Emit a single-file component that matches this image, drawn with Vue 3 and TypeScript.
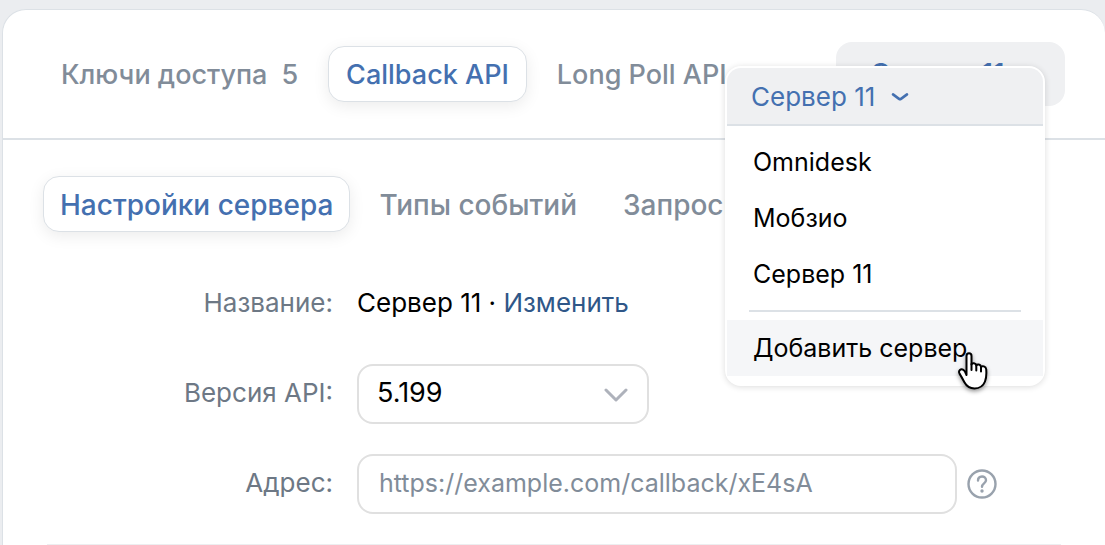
<script setup lang="ts">
import { ref } from 'vue'

interface Tab {
  id: string
  label: string
  count?: number
}

const sections: Tab[] = [
  { id: 'keys', label: 'Ключи доступа', count: 5 },
  { id: 'callback', label: 'Callback API' },
  { id: 'longpoll', label: 'Long Poll API' },
]
const subsections: Tab[] = [
  { id: 'settings', label: 'Настройки сервера' },
  { id: 'events', label: 'Типы событий' },
  { id: 'requests', label: 'Запросы' },
]
const servers: string[] = ['Omnidesk', 'Мобзио', 'Сервер 11']

const section = ref('callback')
const subsection = ref('settings')
const server = ref('Сервер 11')
const version = ref('5.199')
const address = ref('')
const menuOpen = ref(true)

function choose(name: string): void {
  server.value = name
  menuOpen.value = false
}
</script>

<template>
  <main class="card">
    <header class="header">
      <nav class="tabs">
        <button
          v-for="tab in sections"
          :key="tab.id"
          type="button"
          class="tab"
          :class="{ active: section === tab.id }"
          @click="section = tab.id"
        >
          {{ tab.label }}<span v-if="tab.count" class="count">{{ tab.count }}</span>
        </button>
      </nav>
      <div class="picker">
        <button type="button" class="picker-button" @click="menuOpen = true">{{ server }}</button>
        <div v-if="menuOpen" class="menu">
          <button type="button" class="menu-head" @click="menuOpen = false">
            {{ server }}
            <svg class="menu-chevron" viewBox="0 0 18 10" aria-hidden="true">
              <path d="M2 2.4 L8 6.8 Q9 7.4 10 6.8 L16 2.4" />
            </svg>
          </button>
          <div class="menu-list">
            <button v-for="name in servers" :key="name" type="button" class="item" @click="choose(name)">
              {{ name }}
            </button>
            <hr class="separator" />
            <button type="button" class="item hovered">
              <span class="item-text">Добавить сервер
                <svg class="cursor" viewBox="0 0 32 40" aria-hidden="true">
                  <path
                    d="M9.5 24 V5 C9.5 1.3 14.5 1.3 14.5 5 V13.5 C15 11.6 19 11.8 19.3 14.4 C20.2 12.8 23.6 13.2 24 15.8 C25.2 14.6 28.8 15.2 29.2 18.2 C29.6 23 29.4 27 28 30.5 C26.2 35 22.5 37.4 17.5 37.4 C12.5 37.4 9.6 35.2 7.4 31.2 C5.6 27.8 4.4 25.6 2.5 22.6 C1 19.6 3.8 17.2 6.4 18.8 C7.8 19.8 8.6 21.8 9.5 24 Z"
                  />
                  <path class="fingers" d="M14.5 13 V19 M19.3 14.5 V19.5 M24 16 V20.5" />
                </svg>
              </span>
            </button>
          </div>
        </div>
      </div>
    </header>

    <nav class="tabs subtabs">
      <button
        v-for="tab in subsections"
        :key="tab.id"
        type="button"
        class="tab"
        :class="{ active: subsection === tab.id }"
        @click="subsection = tab.id"
      >
        {{ tab.label }}
      </button>
    </nav>

    <form class="form" @submit.prevent>
      <span class="label">Название:</span>
      <div class="name">{{ server }} · <a href="#">Изменить</a></div>

      <label class="label" for="version">Версия API:</label>
      <div class="select">
        <select id="version" v-model="version" class="field">
          <option>5.199</option>
        </select>
        <svg class="select-chevron" viewBox="0 0 24 14" aria-hidden="true">
          <path d="M2 2 L12 12 L22 2" />
        </svg>
      </div>

      <label class="label" for="address">Адрес:</label>
      <div class="address">
        <input
          id="address"
          v-model="address"
          class="field"
          type="text"
          placeholder="https://example.com/callback/xE4sA"
        />
        <button type="button" class="help" aria-label="Справка">
          <svg viewBox="0 0 30 30" aria-hidden="true">
            <circle cx="15" cy="15" r="13.5" />
            <path d="M11 11.6 C11 6.2 19 6.2 19 11.2 C19 14.4 15 14.4 15 17.8" />
            <circle class="dot" cx="15" cy="22" r="1.7" />
          </svg>
        </button>
      </div>
    </form>
    <hr class="bottom-line" />
  </main>
</template>

<style>
html,
body {
  background: #ebedf0;
}
body {
  overflow: hidden;
}
</style>

<style scoped>
.card {
  box-sizing: border-box;
  margin: 9px 0 0 2px;
  border: 1px solid #dce1e6;
  border-right: 0;
  border-bottom: 0;
  border-radius: 24px 24px 0 0;
  background: #fff;
  color: #000;
  font: 400 26px/32px Inter, sans-serif;
}
button,
input,
select {
  margin: 0;
  border: 0;
  padding: 0;
  background: none;
  color: inherit;
  font: inherit;
  cursor: pointer;
}
.header {
  display: flex;
  align-items: center;
  justify-content: space-between;
  height: 128px;
  padding: 0 40px;
  border-bottom: 2px solid #dce1e6;
}
.tabs {
  display: flex;
  gap: 12px;
}
.tab {
  box-sizing: border-box;
  height: 56px;
  padding: 2px 17px 0;
  border: 1px solid transparent;
  border-radius: 16px;
  color: #818c99;
  font-size: 27px;
  font-weight: 500;
  white-space: nowrap;
}
.tab.active {
  border-color: #dce1e6;
  background: #fff;
  box-shadow: 0 4px 16px rgba(0, 0, 0, 0.08);
  color: #4470b0;
}
.count {
  margin-left: 14px;
}
.picker {
  position: relative;
}
.picker-button {
  width: 229px;
  height: 64px;
  padding: 0 34px;
  border-radius: 16px;
  background: #eff0f2;
  color: #4470b0;
  font-size: 28px;
  font-weight: 500;
  text-align: left;
}
.menu {
  position: absolute;
  top: 24px;
  right: 20px;
  z-index: 1;
  width: 316px;
  border: 2px solid #fff;
  border-radius: 16px;
  background: #fff;
  box-shadow: 0 1px 6px rgba(0, 0, 0, 0.14);
}
.menu-head {
  display: flex;
  align-items: center;
  gap: 16px;
  width: 100%;
  height: 58px;
  padding: 2px 24px 0;
  border-bottom: 2px solid #dce1e6;
  border-radius: 14px 14px 0 0;
  background: #eff0f2;
  color: #4470b0;
}
.menu-chevron {
  width: 18px;
  height: 10px;
  fill: none;
  stroke: #4470b0;
  stroke-width: 2.6;
  stroke-linecap: round;
}
.menu-list {
  display: flex;
  flex-direction: column;
  padding: 8px 0;
  font-size: 25px;
}
.item {
  height: 56px;
  padding: 0 26px;
  text-align: left;
}
.item.hovered {
  background: #f5f6f8;
}
.item-text {
  position: relative;
}
.separator {
  width: 272px;
  height: 2px;
  margin: 8px auto;
  border: 0;
  background: #dce1e6;
}
.cursor {
  position: absolute;
  top: 18px;
  right: -22px;
  width: 32px;
  height: 40px;
  fill: #fff;
  stroke: #000;
  stroke-width: 2;
  stroke-linejoin: round;
  filter: drop-shadow(0 2px 2px rgba(0, 0, 0, 0.4));
}
.fingers {
  fill: none;
  stroke-linecap: round;
}
.subtabs {
  padding: 36px 40px 0;
}
.subtabs .tab {
  padding: 2px 16px 0;
  font-size: 28px;
}
.form {
  display: grid;
  grid-template-columns: 330px minmax(0, 1fr);
  column-gap: 24px;
  row-gap: 30px;
  align-items: center;
  padding: 42px 108px 30px 0;
}
.label {
  padding-bottom: 2px;
  color: #6d7885;
  text-align: right;
}
.name {
  padding: 13px 0 15px;
}
.name a {
  color: #2f5788;
  text-decoration: none;
}
.field {
  box-sizing: border-box;
  width: 100%;
  height: 60px;
  padding: 0 18px 2px;
  border: 2px solid #e0e0e0;
  border-radius: 16px;
  background: #fff;
  font-size: 27px;
  appearance: none;
}
.address .field {
  padding: 0 20px 2px;
  font-size: 25px;
}
.field::placeholder {
  color: #818c99;
  opacity: 1;
}
.select {
  position: relative;
  display: flex;
  width: 292px;
}
.select-chevron {
  position: absolute;
  top: 24px;
  right: 21px;
  width: 24px;
  height: 14px;
  fill: none;
  stroke: #aeb2bb;
  stroke-width: 3;
  stroke-linecap: round;
  stroke-linejoin: round;
  pointer-events: none;
}
.address {
  display: flex;
  align-items: center;
  gap: 10px;
}
.help {
  flex: none;
  width: 30px;
  height: 30px;
}
.help svg {
  display: block;
  fill: none;
  stroke: #99a2ad;
  stroke-width: 2.4;
  stroke-linecap: round;
}
.help .dot {
  fill: #99a2ad;
  stroke: none;
}
.bottom-line {
  height: 2px;
  margin: 0 44px;
  border: 0;
  background: #edeef0;
}
</style>
